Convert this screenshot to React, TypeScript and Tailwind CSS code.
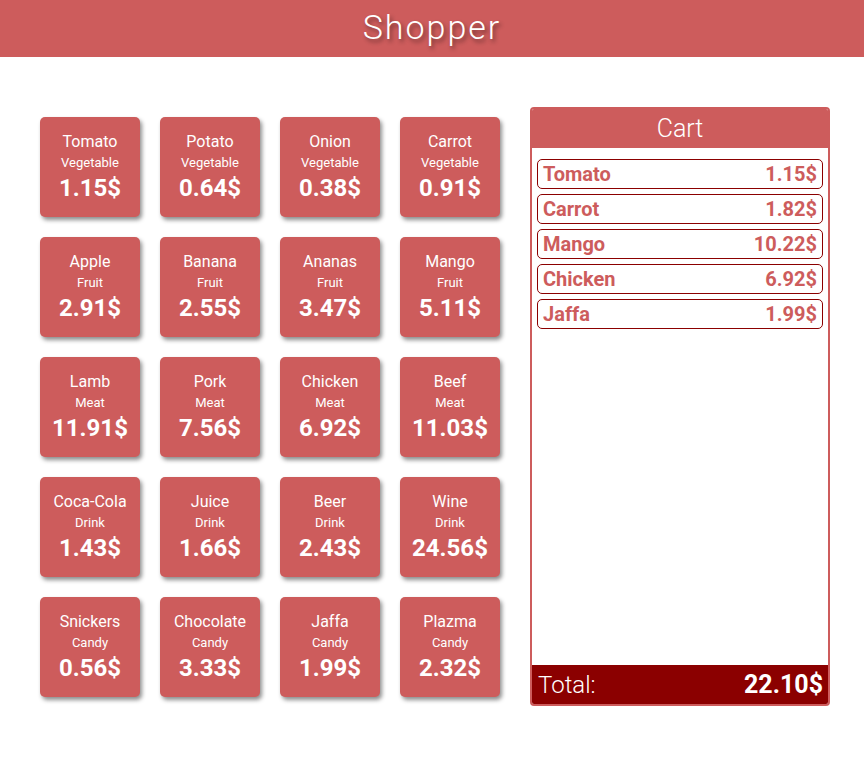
const products = [
  { name: "Tomato", type: "Vegetable", price: 1.15 },
  { name: "Potato", type: "Vegetable", price: 0.64 },
  { name: "Onion", type: "Vegetable", price: 0.38 },
  { name: "Carrot", type: "Vegetable", price: 0.91 },
  { name: "Apple", type: "Fruit", price: 2.91 },
  { name: "Banana", type: "Fruit", price: 2.55 },
  { name: "Ananas", type: "Fruit", price: 3.47 },
  { name: "Mango", type: "Fruit", price: 5.11 },
  { name: "Lamb", type: "Meat", price: 11.91 },
  { name: "Pork", type: "Meat", price: 7.56 },
  { name: "Chicken", type: "Meat", price: 6.92 },
  { name: "Beef", type: "Meat", price: 11.03 },
  { name: "Coca-Cola", type: "Drink", price: 1.43 },
  { name: "Juice", type: "Drink", price: 1.66 },
  { name: "Beer", type: "Drink", price: 2.43 },
  { name: "Wine", type: "Drink", price: 24.56 },
  { name: "Snickers", type: "Candy", price: 0.56 },
  { name: "Chocolate", type: "Candy", price: 3.33 },
  { name: "Jaffa", type: "Candy", price: 1.99 },
  { name: "Plazma", type: "Candy", price: 2.32 },
];

const cart = [
  { name: "Tomato", price: 1.15 },
  { name: "Carrot", price: 1.82 },
  { name: "Mango", price: 10.22 },
  { name: "Chicken", price: 6.92 },
  { name: "Jaffa", price: 1.99 },
];

export default function App() {
  const total = cart.reduce((s, i) => s + i.price, 0);

  return (
    <div className="min-h-[770px] w-[864px] bg-white font-['Roboto',sans-serif]">
      <header className="flex h-[57px] items-center justify-center bg-[#cd5c5c]">
        <h1 className="-mt-[2px] text-[34px] font-light tracking-[2px] text-white [text-shadow:2px_3px_4px_rgba(0,0,0,0.45)]">
          Shopper
        </h1>
      </header>

      <main className="flex items-start pl-[40px] pt-[50px]">
        {/* produkti */}
        <div className="grid grid-cols-4 gap-[20px] pt-[10px]">
          {products.map((p) => (
            <div
              key={p.name}
              className="flex h-[100px] w-[100px] cursor-pointer flex-col items-center rounded-[5px] bg-[#cd5c5c] pt-[15px] text-white shadow-[2px_3px_4px_rgba(0,0,0,0.45)]"
            >
              <span className="text-base leading-[20px]">{p.name}</span>
              <span className="text-[13px] leading-[22px]">{p.type}</span>
              <span className="text-[24px] font-bold leading-[28px]">
                {p.price.toFixed(2)}$
              </span>
            </div>
          ))}
        </div>

        {/* korpa */}
        <div className="ml-[30px] flex h-[599px] w-[300px] flex-col overflow-hidden rounded-[4px] border-2 border-[#cd5c5c]">
          <div className="flex h-[39px] items-center justify-center bg-[#cd5c5c] text-[25px] font-light text-white">
            Cart
          </div>
          <div className="flex flex-1 flex-col gap-[5px] px-[5px] pt-[11px]">
            {cart.map((i) => (
              <div
                key={i.name}
                className="flex h-[30px] items-center justify-between rounded-[5px] border border-[#8b0000] px-[5px] text-[20px] font-bold text-[#cd5c5c]"
              >
                <span>{i.name}</span>
                <span>{i.price.toFixed(2)}$</span>
              </div>
            ))}
          </div>
          <div className="flex h-[39px] items-center justify-between bg-[#8b0000] pl-[6px] pr-[5px] text-white">
            <span className="text-[24px] font-light">Total:</span>
            <span className="text-[25px] font-bold">{total.toFixed(2)}$</span>
          </div>
        </div>
      </main>
    </div>
  );
}
